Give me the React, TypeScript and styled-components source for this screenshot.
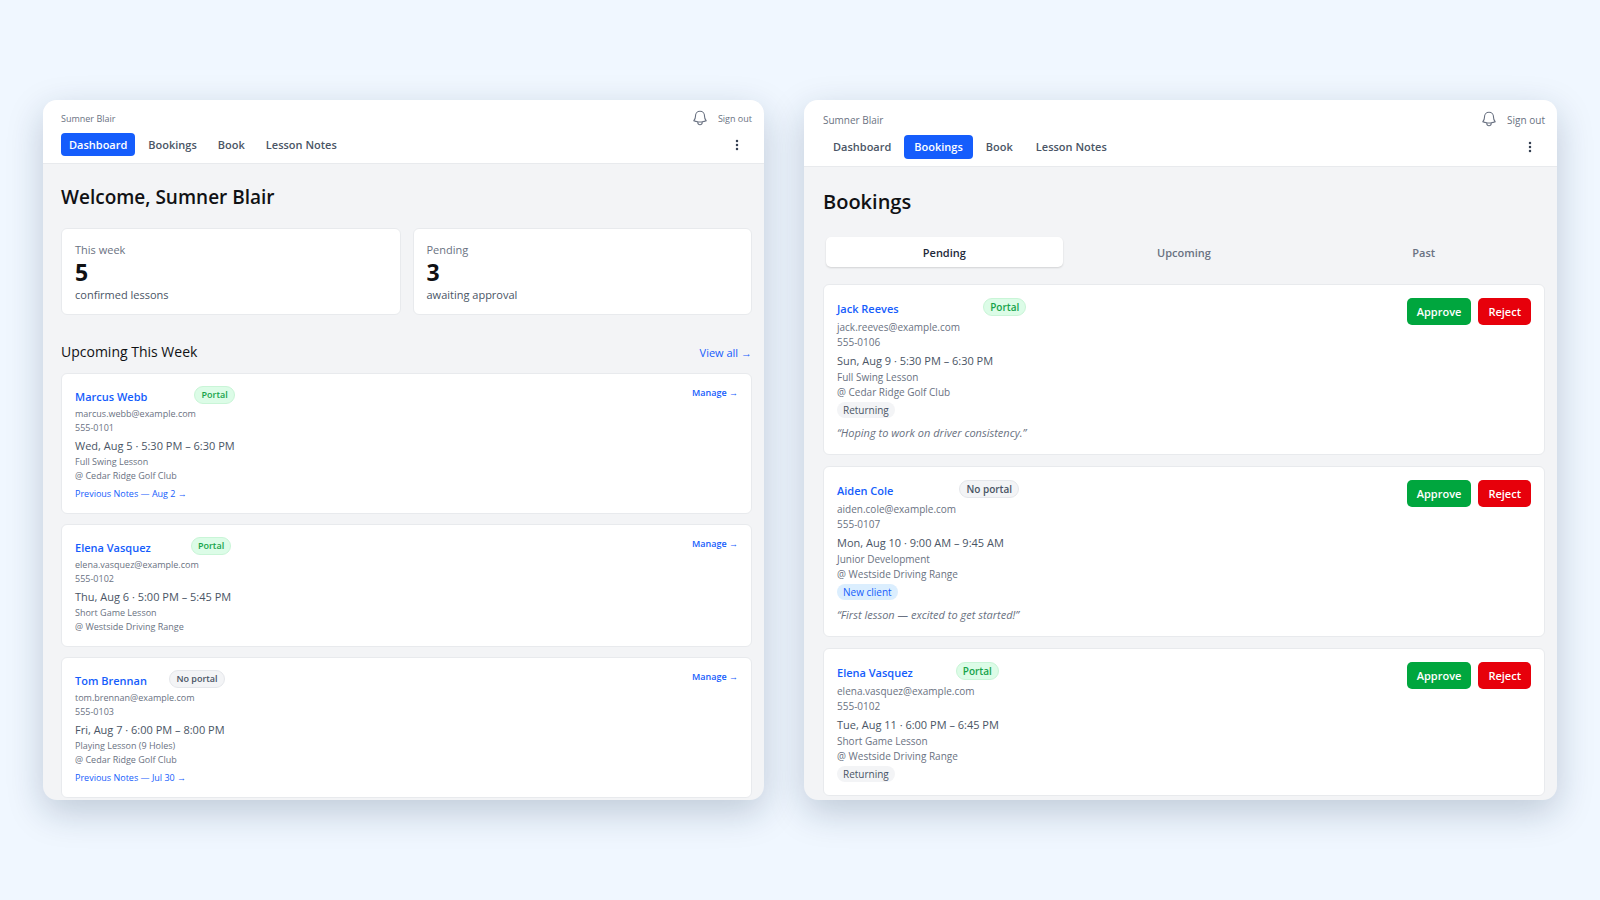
import React from "react";
import styled, { createGlobalStyle, css, ThemeProvider } from "styled-components";

const compact = {
  small: 9, title: 19, smallLine: 14, nameLine: 21, left: 18, titleLine: 29,
  navHeight: 23, navPad: 8, navGap: 5, headTop: 10, headGap: 5, cardPadY: 12, bell: 18, cardGap: 10,
};
const regular = {
  small: 10, title: 20, smallLine: 15, nameLine: 22, left: 19, titleLine: 31,
  navHeight: 24, navPad: 10, navGap: 3, headTop: 11, headGap: 6, cardPadY: 13, bell: 18, cardGap: 11,
};
type Density = typeof compact;
type T = { theme: any };
const px = (key: keyof Density) => (p: T) => `${p.theme[key]}px`;

const GlobalStyle = createGlobalStyle`
  * { box-sizing: border-box; }
  body {
    margin: 0;
    background: #f0f7ff;
    font-family: "Open Sans", "Noto Sans", sans-serif;
    color: #101114;
  }
  h1, h2, h3, p { margin: 0; }
  a { color: #155dfc; text-decoration: none; }
  button { font-family: inherit; border: 0; padding: 0; background: none; cursor: pointer; }
`;

const Page = styled.div`
  min-height: 100vh;
  padding: 24px 43px;
  display: grid;
  grid-template-columns: minmax(0, 721fr) minmax(0, 753fr);
  gap: 40px;
  align-content: center;
`;

const Panel = styled.section`
  border-radius: 14px;
  overflow: hidden;
  background: #f3f4f6;
  box-shadow: 0 12px 36px rgba(15, 40, 75, 0.22);
`;

const Header = styled.header`
  background: #fff;
  border-bottom: 1px solid #e8eaed;
  padding: ${px("headTop")} 12px 7px ${px("left")};
`;

const HeaderRow = styled.div`
  display: flex;
  align-items: center;
  justify-content: space-between;
`;

const Account = styled.span`
  font-size: ${px("small")};
  line-height: 18px;
  color: #6a7282;
`;

const HeaderActions = styled.div`
  display: flex;
  align-items: center;
  gap: 9px;
  height: 18px;
`;

const IconButton = styled.button`
  display: flex;
  align-items: center;
  justify-content: center;
  color: #6a7282;
`;

const BellButton = styled(IconButton)`
  padding-bottom: 3px;
`;

const MenuButton = styled(IconButton)`
  width: 30px;
  height: ${px("navHeight")};
  color: #364153;
`;

const SignOut = styled.button`
  font-size: ${px("small")};
  line-height: 18px;
  color: #6a7282;
`;

const NavRow = styled(HeaderRow)`
  margin-top: ${px("headGap")};
`;

const Nav = styled.nav`
  display: flex;
  gap: ${px("navGap")};
`;

const NavLink = styled.a<{ $active?: boolean }>`
  height: ${px("navHeight")};
  line-height: ${px("navHeight")};
  padding: 0 ${px("navPad")};
  border-radius: 4px;
  font-size: 11px;
  font-weight: 600;
  color: #4a5565;
  ${(p) => p.$active && css`background: #155dfc; color: #fff;`}
`;

const Main = styled.main<{ $bottom: number }>`
  padding: 19px 12px ${(p) => p.$bottom}px ${px("left")};
`;

const Title = styled.h1`
  font-size: ${px("title")};
  line-height: ${px("titleLine")};
  font-weight: 600;
`;

const surface = css`
  background: #fff;
  border: 1px solid #e8eaed;
  border-radius: 6px;
`;

const Stats = styled.div`
  display: grid;
  grid-template-columns: 1fr 1fr;
  gap: 12px;
  margin-top: 16px;
`;

const Stat = styled.div`
  ${surface}
  padding: 12px 13px 11px;
`;

const StatLabel = styled.p`
  font-size: 11px;
  line-height: 18px;
  color: #6a7282;
`;

const StatValue = styled.p`
  font-size: 23px;
  line-height: 27px;
  font-weight: 700;
`;

const StatNote = styled.p`
  font-size: 11px;
  line-height: 17px;
  color: #4a5565;
`;

const SectionHead = styled.div`
  display: flex;
  justify-content: space-between;
  align-items: baseline;
  margin: 25px 0 9px;
`;

const SectionTitle = styled.h2`
  font-size: 14px;
  line-height: 24px;
  font-weight: 500;
`;

const Arrow = styled.span`
  font-family: "Liberation Sans", sans-serif;
  font-weight: 400;
  line-height: 1;
`;

const ViewAll = styled.a`
  font-size: 11px;
`;

const CardList = styled.ul`
  list-style: none;
  margin: 0;
  padding: 0;
  display: grid;
  gap: ${px("cardGap")};
`;

const Card = styled.li`
  ${surface}
  padding: ${px("cardPadY")} 13px;
  display: flex;
  justify-content: space-between;
  align-items: flex-start;
`;

const NameRow = styled.div`
  display: flex;
  justify-content: space-between;
  align-items: flex-start;
  gap: 12px;
  height: ${px("nameLine")};
`;

const ClientName = styled.a`
  font-size: 11px;
  line-height: ${px("nameLine")};
  font-weight: 600;
`;

const PortalBadge = styled.span<{ $on: boolean }>`
  height: 18px;
  line-height: 16px;
  padding: 0 6px;
  border-radius: 9px;
  font-size: ${px("small")};
  font-weight: 600;
  border: 1px solid ${(p) => (p.$on ? "#c9f5d7" : "#e5e7eb")};
  background: ${(p) => (p.$on ? "#dcfce7" : "#f3f4f6")};
  color: ${(p) => (p.$on ? "#16a34a" : "#4a5565")};
`;

const Detail = styled.p`
  font-size: ${px("small")};
  line-height: ${px("smallLine")};
  color: #6a7282;
`;

const When = styled.p`
  margin-top: 2px;
  font-size: 11px;
  line-height: 18px;
  color: #4a5565;
`;

const NotesLink = styled.a`
  display: block;
  margin-top: 4px;
  font-size: ${px("small")};
  line-height: 14px;
`;

const ManageLink = styled.a`
  font-size: ${px("small")};
  line-height: 14px;
  font-weight: 600;
`;

const ClientTag = styled.span<{ $fresh: boolean }>`
  display: block;
  width: fit-content;
  margin-top: 2px;
  padding: 0 6px;
  border-radius: 8px;
  font-size: ${px("small")};
  line-height: 16px;
  background: ${(p) => (p.$fresh ? "#dbeefe" : "#f3f4f6")};
  color: ${(p) => (p.$fresh ? "#155dfc" : "#4a5565")};
`;

const Quote = styled.p`
  margin-top: 6px;
  font-size: 11px;
  line-height: 17px;
  font-style: italic;
  color: #6a7282;
`;

const Tabs = styled.div`
  display: grid;
  grid-template-columns: repeat(3, 1fr);
  gap: 3px;
  padding: 4px 3px;
  margin: 16px 0 13px;
`;

const Tab = styled.button<{ $active?: boolean }>`
  height: 30px;
  border-radius: 5px;
  font-size: 11px;
  font-weight: 600;
  color: #6a7282;
  ${(p) =>
    p.$active &&
    css`
      background: #fff;
      color: #1e2939;
      box-shadow: 0 1px 2px rgba(0, 0, 0, 0.14);
    `}
`;

const Decisions = styled.div`
  display: flex;
  gap: 7px;
`;

const DecisionButton = styled.button<{ $tone: "approve" | "reject" }>`
  height: 27px;
  padding: 0 10px;
  border-radius: 5px;
  font-size: 11px;
  font-weight: 600;
  color: #fff;
  background: ${(p) => (p.$tone === "approve" ? "#00a63e" : "#e7000b")};
`;

const BellIcon = ({ size }: { size: number }) => (
  <svg width={size} height={size} viewBox="0 0 24 24" fill="none" stroke="currentColor" strokeWidth="1.5" strokeLinecap="round" strokeLinejoin="round" aria-hidden="true">
    <path d="M14.857 17.082a23.848 23.848 0 0 0 5.454-1.31A8.967 8.967 0 0 1 18 9.75V9A6 6 0 0 0 6 9v.75a8.967 8.967 0 0 1-2.312 6.022c1.733.64 3.56 1.085 5.455 1.31m5.714 0a24.255 24.255 0 0 1-5.714 0m5.714 0a3 3 0 1 1-5.714 0" />
  </svg>
);

const DotsIcon = () => (
  <svg width="4" height="12" viewBox="0 0 4 12" fill="currentColor" aria-hidden="true">
    <circle cx="2" cy="2" r="1.25" />
    <circle cx="2" cy="6" r="1.25" />
    <circle cx="2" cy="10" r="1.25" />
  </svg>
);

const pages = ["Dashboard", "Bookings", "Book", "Lesson Notes"];

const TopBar = ({ active, bell }: { active: string; bell: number }) => (
  <Header>
    <HeaderRow>
      <Account>Sumner Blair</Account>
      <HeaderActions>
        <BellButton type="button" aria-label="Notifications"><BellIcon size={bell} /></BellButton>
        <SignOut type="button">Sign out</SignOut>
      </HeaderActions>
    </HeaderRow>
    <NavRow>
      <Nav>
        {pages.map((p) => (
          <NavLink key={p} href="#" $active={p === active}>{p}</NavLink>
        ))}
      </Nav>
      <MenuButton type="button" aria-label="More"><DotsIcon /></MenuButton>
    </NavRow>
  </Header>
);

interface Lesson {
  name: string;
  portal: boolean;
  email: string;
  phone: string;
  when: string;
  kind: string;
  place: string;
  notes?: string;
  tag?: string;
  quote?: string;
}

const upcoming: Lesson[] = [
  { name: "Marcus Webb", portal: true, email: "marcus.webb@example.com", phone: "555-0101", when: "Wed, Aug 5 · 5:30 PM – 6:30 PM", kind: "Full Swing Lesson", place: "Cedar Ridge Golf Club", notes: "Aug 2" },
  { name: "Elena Vasquez", portal: true, email: "elena.vasquez@example.com", phone: "555-0102", when: "Thu, Aug 6 · 5:00 PM – 5:45 PM", kind: "Short Game Lesson", place: "Westside Driving Range" },
  { name: "Tom Brennan", portal: false, email: "tom.brennan@example.com", phone: "555-0103", when: "Fri, Aug 7 · 6:00 PM – 8:00 PM", kind: "Playing Lesson (9 Holes)", place: "Cedar Ridge Golf Club", notes: "Jul 30" },
];

const pending: Lesson[] = [
  { name: "Jack Reeves", portal: true, email: "jack.reeves@example.com", phone: "555-0106", when: "Sun, Aug 9 · 5:30 PM – 6:30 PM", kind: "Full Swing Lesson", place: "Cedar Ridge Golf Club", tag: "Returning", quote: "“Hoping to work on driver consistency.”" },
  { name: "Aiden Cole", portal: false, email: "aiden.cole@example.com", phone: "555-0107", when: "Mon, Aug 10 · 9:00 AM – 9:45 AM", kind: "Junior Development", place: "Westside Driving Range", tag: "New client", quote: "“First lesson — excited to get started!”" },
  { name: "Elena Vasquez", portal: true, email: "elena.vasquez@example.com", phone: "555-0102", when: "Tue, Aug 11 · 6:00 PM – 6:45 PM", kind: "Short Game Lesson", place: "Westside Driving Range", tag: "Returning" },
];

const LessonInfo = ({ lesson }: { lesson: Lesson }) => (
  <div>
    <NameRow>
      <ClientName href="#">{lesson.name}</ClientName>
      <PortalBadge $on={lesson.portal}>{lesson.portal ? "Portal" : "No portal"}</PortalBadge>
    </NameRow>
    <Detail>{lesson.email}</Detail>
    <Detail>{lesson.phone}</Detail>
    <When>{lesson.when}</When>
    <Detail>{lesson.kind}</Detail>
    <Detail>@ {lesson.place}</Detail>
    {lesson.notes && <NotesLink href="#">Previous Notes — {lesson.notes} <Arrow>→</Arrow></NotesLink>}
    {lesson.tag && <ClientTag $fresh={lesson.tag === "New client"}>{lesson.tag}</ClientTag>}
    {lesson.quote && <Quote>{lesson.quote}</Quote>}
  </div>
);

const Dashboard = () => (
  <ThemeProvider theme={compact}>
    <Panel>
      <TopBar active="Dashboard" bell={compact.bell} />
      <Main $bottom={2}>
        <Title>Welcome, Sumner Blair</Title>
        <Stats>
          <Stat>
            <StatLabel>This week</StatLabel>
            <StatValue>5</StatValue>
            <StatNote>confirmed lessons</StatNote>
          </Stat>
          <Stat>
            <StatLabel>Pending</StatLabel>
            <StatValue>3</StatValue>
            <StatNote>awaiting approval</StatNote>
          </Stat>
        </Stats>
        <SectionHead>
          <SectionTitle>Upcoming This Week</SectionTitle>
          <ViewAll href="#">View all <Arrow>→</Arrow></ViewAll>
        </SectionHead>
        <CardList>
          {upcoming.map((l) => (
            <Card key={l.email}>
              <LessonInfo lesson={l} />
              <ManageLink href="#">Manage <Arrow>→</Arrow></ManageLink>
            </Card>
          ))}
        </CardList>
      </Main>
    </Panel>
  </ThemeProvider>
);

const Bookings = () => (
  <ThemeProvider theme={regular}>
    <Panel>
      <TopBar active="Bookings" bell={regular.bell} />
      <Main $bottom={4}>
        <Title>Bookings</Title>
        <Tabs role="tablist">
          <Tab type="button" role="tab" aria-selected $active>Pending</Tab>
          <Tab type="button" role="tab">Upcoming</Tab>
          <Tab type="button" role="tab">Past</Tab>
        </Tabs>
        <CardList>
          {pending.map((l) => (
            <Card key={l.email}>
              <LessonInfo lesson={l} />
              <Decisions>
                <DecisionButton type="button" $tone="approve">Approve</DecisionButton>
                <DecisionButton type="button" $tone="reject">Reject</DecisionButton>
              </Decisions>
            </Card>
          ))}
        </CardList>
      </Main>
    </Panel>
  </ThemeProvider>
);

export default function App() {
  return (
    <>
      <GlobalStyle />
      <Page>
        <Dashboard />
        <Bookings />
      </Page>
    </>
  );
}
